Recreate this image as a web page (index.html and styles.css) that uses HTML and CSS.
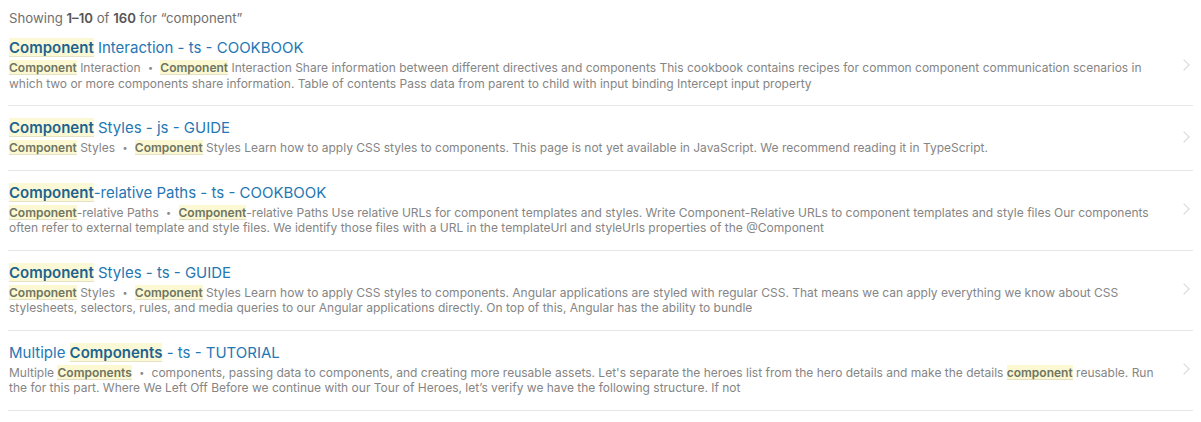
FILE: index.html
```html
<!DOCTYPE html>
<html>
<head>
<meta charset="utf-8">
<link rel="stylesheet" href="styles.css">
</head>
<body>
<div class="page">
  <div class="summary">Showing <b>1–10</b> of <b>160</b> for “component”</div>
  <ul class="results">
    <li class="result">
      <div class="body">
        <div class="title"><mark>Component</mark> Interaction - ts - COOKBOOK</div>
        <div class="snippet"><mark>Component</mark> Interaction <span class="dot">•</span> <mark>Component</mark> Interaction Share information between different directives and components This cookbook contains recipes for common component communication scenarios in which two or more components share information. Table of contents Pass data from parent to child with input binding Intercept input property</div>
      </div>
      <span class="chev"></span>
    </li>
    <li class="result">
      <div class="body">
        <div class="title"><mark>Component</mark> Styles - js - GUIDE</div>
        <div class="snippet"><mark>Component</mark> Styles <span class="dot">•</span> <mark>Component</mark> Styles Learn how to apply CSS styles to components. This page is not yet available in JavaScript. We recommend reading it in TypeScript.</div>
      </div>
      <span class="chev"></span>
    </li>
    <li class="result">
      <div class="body">
        <div class="title"><mark>Component</mark>-relative Paths - ts - COOKBOOK</div>
        <div class="snippet"><mark>Component</mark>-relative Paths <span class="dot">•</span> <mark>Component</mark>-relative Paths Use relative URLs for component templates and styles. Write Component-Relative URLs to component templates and style files Our components often refer to external template and style files. We identify those files with a URL in the templateUrl and styleUrls properties of the @Component</div>
      </div>
      <span class="chev"></span>
    </li>
    <li class="result">
      <div class="body">
        <div class="title"><mark>Component</mark> Styles - ts - GUIDE</div>
        <div class="snippet"><mark>Component</mark> Styles <span class="dot">•</span> <mark>Component</mark> Styles Learn how to apply CSS styles to components. Angular applications are styled with regular CSS. That means we can apply everything we know about CSS stylesheets, selectors, rules, and media queries to our Angular applications directly. On top of this, Angular has the ability to bundle</div>
      </div>
      <span class="chev"></span>
    </li>
    <li class="result">
      <div class="body">
        <div class="title">Multiple <mark>Components</mark> - ts - TUTORIAL</div>
        <div class="snippet">Multiple <mark>Components</mark> <span class="dot">•</span> components, passing data to components, and creating more reusable assets. Let's separate the heroes list from the hero details and make the details <mark>component</mark> reusable. Run the for this part. Where We Left Off Before we continue with our Tour of Heroes, let’s verify we have the following structure. If not</div>
      </div>
      <span class="chev"></span>
    </li>
  </ul>
</div>
</body>
</html>
```
FILE: styles.css
```css
html, body {
  margin: 0;
  padding: 0;
  background: #fff;
}
body {
  font-family: Inter, "Noto Sans", sans-serif;
  color: #666;
}
.page {
  padding: 10px 8px 0 8px;
}
.summary {
  font-size: 13.2px;
  line-height: 16px;
  color: #6f6f6f;
  padding-left: 1px;
}
.summary b {
  font-weight: 600;
  color: #555;
}
.results {
  list-style: none;
  margin: 0;
  padding: 0;
  width: 1185px;
}
.result {
  display: flex;
  align-items: center;
  border-bottom: 1px solid #e6e6e6;
  padding: 12px 0 14px 1px;
}
.body {
  flex: 1;
  min-width: 0;
  padding-right: 18px;
}
.title {
  font-size: 15px;
  line-height: 20px;
  color: #2577b3;
  margin-bottom: 2px;
}
.title mark {
  background: #fbf8d6;
  color: #1c638f;
  font-weight: 600;
  box-shadow: inset 0 -1px 0 #e6e3c4;
}
.snippet {
  font-size: 12px;
  line-height: 15.5px;
  color: #858585;
}
.snippet mark {
  background: #fbf8d2;
  color: #6f7562;
  font-weight: 600;
  box-shadow: inset 0 -1px 0 #e3e0c6;
}
.dot {
  font-size: 9px;
  color: #888;
  padding: 0 4px;
  vertical-align: 1px;
}
.chev {
  width: 7px;
  height: 7px;
  border-top: 1px solid #d8d8d8;
  border-right: 1px solid #d8d8d8;
  transform: rotate(45deg);
  margin-right: 5px;
  flex: none;
}
```
